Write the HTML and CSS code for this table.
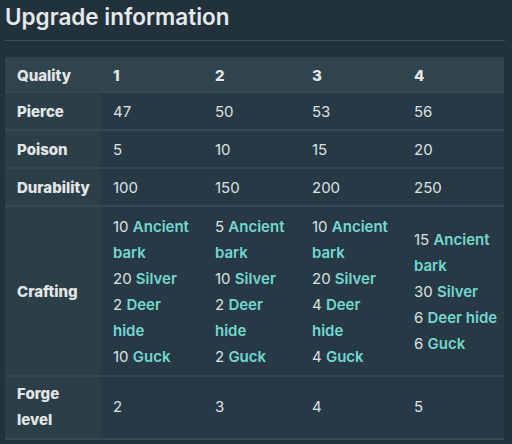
FILE: index.html
```html
<!DOCTYPE html>
<html>
<head>
<meta charset="utf-8">
<link rel="stylesheet" href="styles.css">
</head>
<body>
<div class="page">
  <h2 class="title">Upgrade information</h2>
  <table class="upg">
    <colgroup>
      <col class="c0"><col class="c1"><col class="c2"><col class="c3"><col class="c4">
    </colgroup>
    <tr class="head">
      <th>Quality</th><th>1</th><th>2</th><th>3</th><th>4</th>
    </tr>
    <tr>
      <th>Pierce</th><td>47</td><td>50</td><td>53</td><td>56</td>
    </tr>
    <tr>
      <th>Poison</th><td>5</td><td>10</td><td>15</td><td>20</td>
    </tr>
    <tr>
      <th>Durability</th><td>100</td><td>150</td><td>200</td><td>250</td>
    </tr>
    <tr class="craft">
      <th>Crafting</th>
      <td>10 <a>Ancient bark</a><br>20 <a>Silver</a><br>2 <a>Deer hide</a><br>10 <a>Guck</a></td>
      <td>5 <a>Ancient bark</a><br>10 <a>Silver</a><br>2 <a>Deer hide</a><br>2 <a>Guck</a></td>
      <td>10 <a>Ancient bark</a><br>20 <a>Silver</a><br>4 <a>Deer hide</a><br>4 <a>Guck</a></td>
      <td>15 <a>Ancient bark</a><br>30 <a>Silver</a><br>6 <a>Deer hide</a><br>6 <a>Guck</a></td>
    </tr>
    <tr class="forge">
      <th>Forge level</th><td>2</td><td>3</td><td>4</td><td>5</td>
    </tr>
  </table>
</div>
</body>
</html>
```
FILE: styles.css
```css
html, body {
  margin: 0;
  padding: 0;
  background: #22323d;
}
body {
  font-family: Inter, "Noto Sans", sans-serif;
  color: #dde1e3;
  width: 512px;
  height: 444px;
  overflow: hidden;
}
.page {
  padding: 0 7px 0 5px;
}
.title {
  margin: 0;
  padding: 3px 0 10px 0;
  font-size: 22.5px;
  font-weight: 600;
  line-height: 27px;
  color: #e6e9ea;
  border-bottom: 1px solid #3d525c;
}
.upg {
  margin-top: 16px;
  width: 499px;
  border-collapse: collapse;
  font-size: 15px;
  line-height: 26px;
  table-layout: fixed;
}
.c0 { width: 96px; }
.c1 { width: 102px; }
.c2 { width: 97px; }
.c3 { width: 102px; }
.c4 { width: 102px; }
.upg th, .upg td {
  text-align: left;
  padding: 6px 10px 4px 12px;
  border-bottom: 2px solid #344953;
  vertical-align: middle;
}
.upg td:last-child {
  padding-right: 0;
}
.upg th {
  font-weight: 800;
  background: #2c3f48;
  color: #e3e6e7;
}
.upg td {
  background: #263944;
  font-weight: 400;
}
.upg tr.head th {
  background: #2f444d;
  padding-top: 6px;
  padding-bottom: 2px;
}
.upg tr.craft td {
  padding-top: 7px;
  padding-bottom: 5px;
}
.upg a {
  color: #74d7d0;
  font-weight: 600;
}
.upg tr.forge th, .upg tr.forge td {
  padding-top: 4px;
  padding-bottom: 5px;
}
```
